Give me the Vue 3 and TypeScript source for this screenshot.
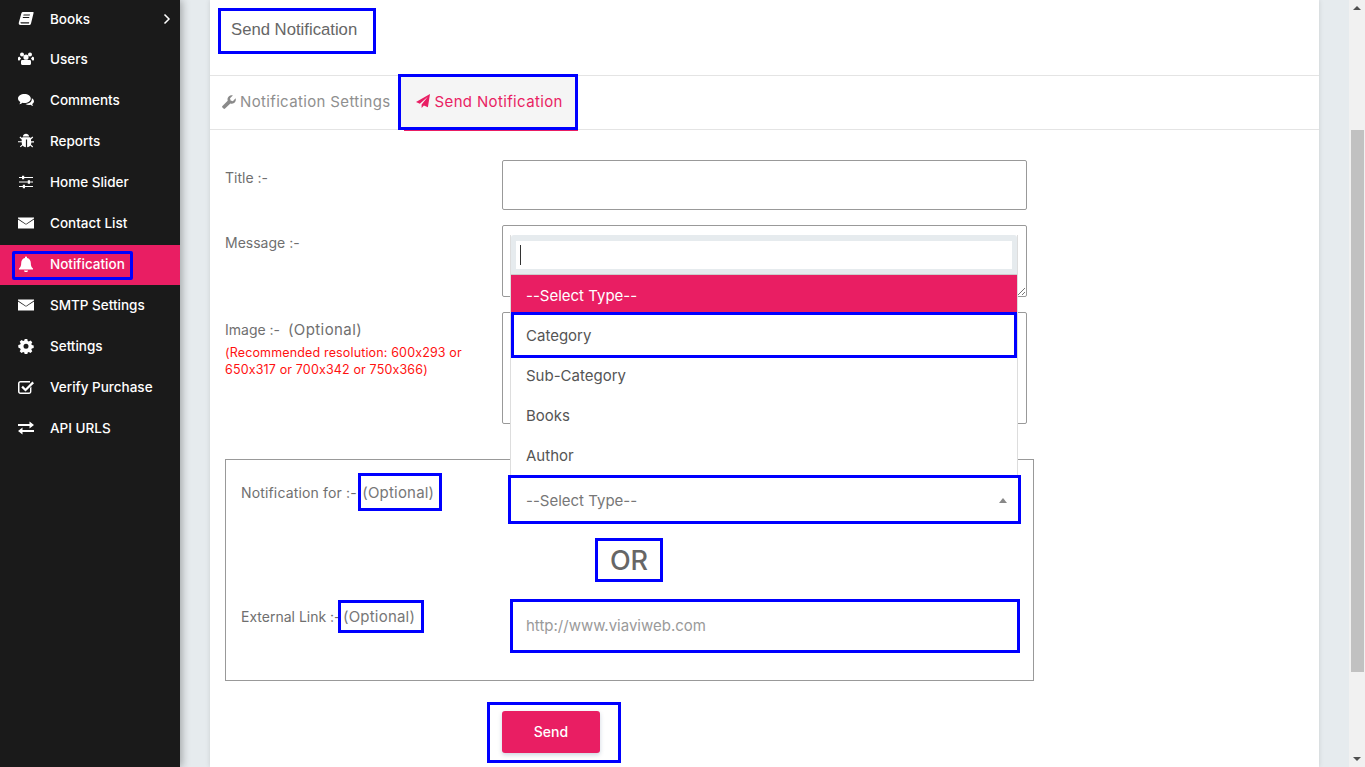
<script setup lang="ts">
type NavItem = { label: string; icon: string; active?: boolean; arrow?: boolean }

const nav: NavItem[] = [
  { label: 'Books', icon: 'book', arrow: true },
  { label: 'Users', icon: 'users' },
  { label: 'Comments', icon: 'comments' },
  { label: 'Reports', icon: 'bug' },
  { label: 'Home Slider', icon: 'sliders' },
  { label: 'Contact List', icon: 'mail' },
  { label: 'Notification', icon: 'bell', active: true },
  { label: 'SMTP Settings', icon: 'mail' },
  { label: 'Settings', icon: 'cog' },
  { label: 'Verify Purchase', icon: 'check' },
  { label: 'API URLS', icon: 'exchange' },
]

const icons: Record<string, string> = {
  book: 'M5 1h10.500v1.200L13 12.400c-.3 1-1 1.600-2.200 1.600H2.600C1.200 14 .5 13 .8 11.700L3.400 2.200C3.700 1.400 4.200 1 5 1zm.6 2.600-.3 1h6.400l.3-1H5.600zM5 6l-.3 1h6.400l.3-1H5zm-2.400 5.200c-.2.700 0 1.200.7 1.200h7.600l.3-1.200H2.600z',
  users: 'M4 1.600a2 2 0 1 1 0 4 2 2 0 0 1 0-4zm8 0a2 2 0 1 1 0 4 2 2 0 0 1 0-4zM8 3.600a2.600 2.600 0 1 1 0 5.200 2.600 2.600 0 0 1 0-5.200zM0 7.200C0 6.300.7 5.800 1.800 5.800c.3.800.7 1.500 1.300 2-.7.400-1.200 1-1.500 1.800H.9C.3 9.600 0 9 0 8.400V7.200zm16 0v1.200c0 .6-.3 1.200-.9 1.200h-.7c-.3-.8-.8-1.400-1.500-1.800.6-.5 1-1.200 1.300-2 1.100 0 1.800.5 1.800 1.400zM4.200 9h7.600c.8 0 1.200.7 1.200 1.700v1.800c0 .9-.6 1.500-1.500 1.500H4.500C3.600 14 3 13.400 3 12.500v-1.800C3 9.700 3.400 9 4.200 9z',
  comments: 'M6.500 2C10 2 12.800 3.900 12.800 6.500S10 11 6.500 11c-.7 0-1.400-.1-2-.2-.8.700-1.900 1.200-3.200 1.400.5-.7.900-1.500 1-2.300C.9 9.100 0 7.900 0 6.500 0 3.900 2.900 2 6.500 2zm7.300 4.200c1.300.7 2.200 1.900 2.200 3.100 0 1.100-.7 2.100-1.800 2.800.2.700.5 1.300 1 1.900-1.100-.2-2-.6-2.800-1.300-.5.100-1 .2-1.500.2-1.300 0-2.500-.4-3.400-1 3.600 0 6.700-2 6.300-5.700z',
  bug: 'M8 .8c1.600 0 2.900 1.100 3.100 2.600H4.900C5.100 1.900 6.400.8 8 .8zM4.500 4.200h7c.6 0 1 .4 1.200.9l1.700-1.500.8.9-2.200 2v1.700H16v1.200h-2.700c0 .8-.2 1.500-.4 2.100l2.200 2-.8.9-2-1.800c-.8 1-1.900 1.600-3.200 1.700V6.600H7.900v7.600c-1.300-.1-2.400-.7-3.200-1.700l-2 1.800-.8-.9 2.200-2c-.2-.6-.4-1.300-.4-2.100H0V8.200h3.700V6.500l-2.200-2 .8-.9L4 5.100c.1-.5.500-.9.500-.9z',
  sliders: 'M1 3h3V1.800h2.200V3H15v1H6.200v1.200H4V4H1V3zm0 4.500h8.800V6.300H12v1.200h3v1h-3v1.200H9.800V8.500H1v-1zM1 12h3.800v-1.200H7V12h8v1H7v1.200H4.800V13H1v-1z',
  mail: 'M0 2.500h16v1.100L8 8.900 0 3.600V2.500zM0 4.500l7.700 5.100h.6L16 4.500v8.900H0V4.500z',
  bell: 'M8 .5c.6 0 1 .4 1 1v.6c2.400.5 3.800 2.300 3.800 5 0 2.600.6 4.100 2.200 5.400v.9H1v-.9c1.600-1.300 2.200-2.800 2.200-5.400 0-2.700 1.400-4.500 3.800-5V1.500c0-.6.400-1 1-1zM6 14.500h4c0 1.100-.9 1.500-2 1.500s-2-.4-2-1.500z',
  cog: 'M6.700 1h2.600l.4 1.900c.4.100.8.300 1.100.5l1.700-1 1.800 1.800-1 1.700c.2.400.4.700.5 1.100l1.900.4v2.600l-1.900.4c-.1.400-.3.800-.5 1.100l1 1.700-1.800 1.800-1.700-1c-.3.200-.7.400-1.100.5l-.4 1.900H6.700l-.4-1.900c-.4-.1-.8-.3-1.100-.5l-1.700 1-1.800-1.800 1-1.700c-.2-.3-.4-.7-.5-1.100L.3 9.500V6.900l1.900-.4c.1-.4.3-.7.5-1.100l-1-1.700 1.800-1.800 1.700 1c.3-.2.7-.4 1.100-.5L6.700 1zM8 5.700a2.500 2.500 0 1 0 0 5 2.500 2.500 0 0 0 0-5z',
  check: 'M2.500 2h9.500v1.400H2.500c-.6 0-1 .4-1 1v8c0 .6.400 1 1 1h8.500c.6 0 1-.4 1-1V9l1.400-1.400v4.800c0 1.400-1 2.500-2.400 2.500H2.500C1.100 14.900 0 13.800 0 12.400v-8C0 3 1.100 2 2.500 2zM14.400 2.600 16 4.200 7.500 12.600 3.300 8.400l1.600-1.600 2.600 2.600 6.900-6.800z',
  exchange: 'M11.500 1.500 16 5l-4.500 3.500V6H0V4h11.500V1.500zM4.500 7.500V10H16v2H4.500v2.500L0 11l4.500-3.500z',
}
</script>

<template>
  <div class="page">
    <aside class="sidebar">
      <a v-for="item in nav" :key="item.label" class="nav-item" :class="{ active: item.active }">
        <span class="nav-inner">
          <svg class="nav-icon" viewBox="0 0 16 16" aria-hidden="true"><path :d="icons[item.icon]" fill="#fff" /></svg>
          <span>{{ item.label }}</span>
        </span>
        <svg v-if="item.arrow" class="nav-arrow" viewBox="0 0 8 12" aria-hidden="true"><path d="M1.500 1.500 6 6l-4.500 4.500" fill="none" stroke="#fff" stroke-width="1.500" /></svg>
      </a>
    </aside>

    <main class="content">
      <section class="card">
        <header class="card-head">
          <h1 class="mark page-title">Send Notification</h1>
        </header>

        <nav class="tabs">
          <a class="tab">
            <svg class="tab-icon" viewBox="0 0 16 16" aria-hidden="true"><path fill="#8a8a8a" d="M3.500 15.500c-.5.500-1.300.5-1.800 0L.5 14.300c-.5-.5-.5-1.300 0-1.800l6-6C6 4.600 6.400 2.500 8 1.300 9.300.3 11 .1 12.400.7L9.200 3.800l.6 2.600 2.600.6L15.500 3.800c.6 1.500.3 3.200-.7 4.500-1.200 1.500-3.300 2-5.200 1.300z" /></svg>
            Notification Settings
          </a>
          <a class="tab tab-active">
            <svg class="tab-icon" viewBox="0 0 16 16" aria-hidden="true"><path fill="#e91e63" d="M16 0 13.600 15 9 13 6.400 16v-4L13.500 3 4.400 11 0 9.200z" /></svg>
            Send Notification
          </a>
        </nav>

        <form class="form" @submit.prevent>
          <div class="row">
            <label>Title :-</label>
            <div class="field"></div>
          </div>
          <div class="row">
            <label>Message :-</label>
            <div class="field field-message">
              <svg class="resize" viewBox="0 0 10 10" aria-hidden="true"><path d="M9 2 2 9M9 6 6 9" stroke="#777" fill="none" /></svg>
            </div>
          </div>
          <div class="row row-image">
            <div>
              <label>Image :- <span class="opt-inline">(Optional)</span></label>
              <p class="hint">(Recommended resolution: 600x293 or 650x317 or 700x342 or 750x366)</p>
            </div>
            <div class="field"></div>
          </div>

          <div class="opt-box">
            <div class="opt-row">
              <label class="opt-label label-for">Notification for :-<span class="mark opt-tag">(Optional)</span></label>
              <div class="select mark">
                <span>--Select Type--</span>
                <i class="caret"></i>
              </div>
            </div>
            <div class="or-wrap"><span class="mark or">OR</span></div>
            <div class="opt-row opt-row-link">
              <label class="opt-label">External Link :-<span class="mark opt-tag">(Optional)</span></label>
              <div class="link mark">http://www.viaviweb.com</div>
            </div>
          </div>

          <div class="send-wrap">
            <span class="mark send-mark"><button class="send" type="submit">Send</button></span>
          </div>

          <div class="dropdown">
            <div class="search-wrap"><div class="search"><i class="cursor"></i></div></div>
            <div class="option selected">--Select Type--</div>
            <div class="option mark">Category</div>
            <div class="option">Sub-Category</div>
            <div class="option">Books</div>
            <div class="option">Author</div>
          </div>
        </form>
      </section>
    </main>

    <div class="scrollbar">
      <i class="sb-up"></i>
      <div class="sb-thumb"></div>
      <i class="sb-down"></i>
    </div>
  </div>
</template>

<style>
html,
body {
  margin: 0;
  overflow: hidden;
}
</style>

<style scoped>
* {
  box-sizing: border-box;
}

.page {
  display: flex;
  height: 767px;
  overflow: hidden;
  font-family: "Inter", "Liberation Sans", sans-serif;
  font-feature-settings: "calt" 0;
  font-size: 14px;
  color: #666;
}

.sidebar {
  width: 180px;
  flex: none;
  background: #1a1a1a;
  display: flex;
  flex-direction: column;
  gap: 1px;
  box-shadow: 2px 0 8px rgba(0, 0, 0, 0.3);
  z-index: 1;
}

.nav-item {
  height: 40px;
  padding: 0 9px 2px 12px;
  display: flex;
  align-items: center;
  justify-content: space-between;
  color: #fff;
  font-size: 13.5px;
  font-weight: 500;
}

.nav-item:first-child {
  height: 39px;
}

.nav-item.active {
  background: #e91e63;
}

.nav-inner {
  display: flex;
  align-items: center;
  gap: 16px;
  height: 24px;
  padding: 0 5px 0 6px;
}

.active .nav-inner {
  margin-top: 2px;
  padding-bottom: 2px;
  outline: 3px solid #00f;
  outline-offset: -3px;
  height: 29px;
  width: 121px;
  border-radius: 2px;
}

.nav-icon {
  width: 16px;
  height: 16px;
  flex: none;
}

.nav-arrow {
  width: 8px;
  height: 12px;
}

.content {
  flex: 1;
  background: #e6ebee;
  padding: 0 30px;
  min-width: 0;
}

.card {
  background: #fff;
  height: 767px;
  box-shadow: 0 0 5px rgba(0, 0, 0, 0.12);
}

.card-head {
  height: 76px;
  padding: 8px 8px 0;
  border-bottom: 1px solid #e4e4e4;
}

.mark {
  outline: 3px solid #00f;
  outline-offset: -3px;
}

.page-title {
  margin: 0;
  width: 158px;
  height: 46px;
  padding: 0 0 2px 13px;
  display: flex;
  align-items: center;
  font-family: "Liberation Sans", Arial, sans-serif;
  font-size: 16.7px;
  font-weight: 400;
  color: #666;
}

.tabs {
  display: flex;
  height: 54px;
  padding-left: 12px;
  border-bottom: 1px solid #e4e4e4;
}

.tab {
  display: flex;
  align-items: center;
  gap: 4px;
  padding-bottom: 2px;
  font-size: 15px;
  letter-spacing: 0.35px;
  color: #8f8f8f;
  white-space: nowrap;
}

.tab-icon {
  width: 14px;
  height: 14px;
}

.tab-active {
  position: relative;
  width: 180px;
  margin-left: 7px;
  padding-left: 18px;
  gap: 5px;
  height: 56px;
  margin-top: -2px;
  color: #e91e63;
  background: #f5f5f5;
  outline: 3px solid #00f;
  outline-offset: -3px;
}

.tab-active::after {
  content: "";
  position: absolute;
  left: 6px;
  right: 0;
  bottom: -1px;
  height: 1px;
  background: #e91e63;
}

.form {
  position: relative;
  padding: 30px 0 0 15px;
}

.row {
  display: grid;
  grid-template-columns: 277px 525px;
  margin-bottom: 15px;
  line-height: 20px;
}

.row label,
.opt-label {
  color: #6f6f6f;
}

.row label {
  display: block;
  padding-top: 8px;
}

.opt-inline {
  font-size: 15px;
  letter-spacing: 0.4px;
  margin-left: 4px;
}

.field {
  position: relative;
  height: 50px;
  border: 1px solid #999;
  border-radius: 2px;
}

.field-message {
  height: 72px;
}

.row-image .field {
  height: 112px;
}

.row-image {
  margin-bottom: 35px;
}

.resize {
  position: absolute;
  right: 0;
  bottom: 0;
  width: 10px;
  height: 10px;
}

.hint {
  margin: 4px 0 0;
  color: #f11;
  font-size: 12.5px;
  letter-spacing: 0.15px;
  line-height: 17px;
  width: 255px;
}

.opt-box {
  width: 809px;
  height: 222px;
  border: 1px solid #999;
  padding: 16px 13px 0 15px;
}

.opt-row {
  display: grid;
  grid-template-columns: 269px 510px;
  height: 48px;
}

.opt-row-link {
  height: 54px;
}

.opt-label {
  display: flex;
  align-items: center;
  align-self: flex-start;
  white-space: nowrap;
}

.label-for {
  letter-spacing: 0.15px;
}

.opt-tag {
  margin: -3px 0 -3px 1px;
  padding-right: 3px;
  width: 84px;
  height: 38px;
  display: flex;
  align-items: center;
  justify-content: center;
  font-size: 15px;
  letter-spacing: 0.2px;
  color: #777;
}

.opt-row-link .opt-tag {
  margin: 1px 0 0 -3px;
  padding-right: 3px;
  width: 86px;
  height: 33px;
}

.select,
.link {
  display: flex;
  align-items: center;
  justify-content: space-between;
  font-size: 15px;
  color: #777;
}

.select {
  width: 513px;
  height: 49px;
  margin: -1px 0 0 -2px;
  padding: 1px 14px 0 18px;
}

.link {
  padding: 0 17px 2px 16px;
  color: #9a9a9a;
}

.caret {
  width: 0;
  height: 0;
  border-left: 4px solid transparent;
  border-right: 4px solid transparent;
  border-bottom: 5px solid #888;
}

.or-wrap {
  height: 75px;
  padding: 14px 0 0 354px;
}

.or {
  display: flex;
  align-items: center;
  justify-content: center;
  width: 68px;
  height: 44px;
  font-size: 27px;
  font-weight: 500;
  color: #666;
}

.send-wrap {
  padding: 21px 0 0 262px;
}

.send-mark {
  display: flex;
  align-items: center;
  width: 134px;
  height: 61px;
  padding: 0 0 2px 15px;
}

.send {
  width: 98px;
  height: 42px;
  border: 0;
  padding: 0;
  border-radius: 3px;
  background: #e91e63;
  color: #fff;
  font: 500 14px "Inter", sans-serif;
  box-shadow: 0 2px 4px rgba(60, 90, 130, 0.25);
}

.dropdown {
  position: absolute;
  top: 105px;
  left: 300px;
  width: 508px;
  background: #fff;
  border: solid #ddd;
  border-width: 0 1px 0 1px;
  font-size: 15px;
  color: #555;
}

.search-wrap {
  height: 40px;
  padding: 6px 5px 5px;
  background: #e6ebee;
  border-radius: 3px 3px 0 0;
  border-bottom: 1px solid #ccc;
}

.search {
  position: relative;
  height: 28px;
  background: #fff;
}

.cursor {
  position: absolute;
  left: 4px;
  top: 4px;
  width: 1px;
  height: 20px;
  background: #333;
}

.option {
  height: 40px;
  padding: 0 15px;
  display: flex;
  align-items: center;
}

.selected {
  background: #e91e63;
  color: #fff;
}

.option.mark {
  position: relative;
  margin: 0 3px;
  padding-left: 12px;
  outline-offset: 0;
}

.scrollbar {
  position: relative;
  width: 16px;
  flex: none;
  background: #f1f1f1;
}

.sb-thumb {
  position: absolute;
  top: 130px;
  bottom: 95px;
  left: 2px;
  right: 1px;
  background: #c1c1c1;
}

.sb-up,
.sb-down {
  position: absolute;
  left: 4px;
  width: 0;
  height: 0;
  border-left: 4px solid transparent;
  border-right: 4px solid transparent;
}

.sb-up {
  top: 6px;
  border-bottom: 4px solid #505050;
}

.sb-down {
  bottom: 6px;
  border-top: 4px solid #505050;
}
</style>
